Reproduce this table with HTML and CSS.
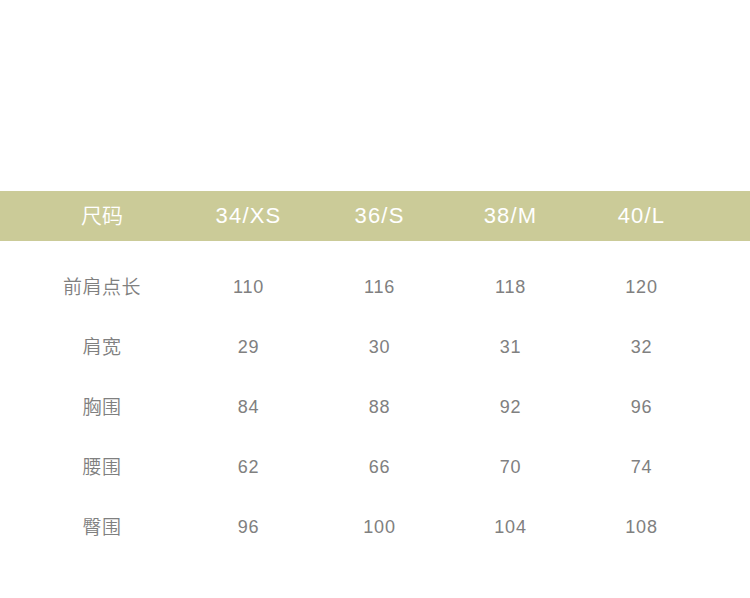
FILE: index.html
```html
<!DOCTYPE html>
<html lang="zh-CN">
<head>
<meta charset="utf-8">
<title>尺码表</title>
<link rel="stylesheet" href="styles.css">
</head>
<body>
<div class="page">
  <div class="size-table">
    <div class="row head">
      <div class="cell label">尺码</div>
      <div class="cell">34/XS</div>
      <div class="cell">36/S</div>
      <div class="cell">38/M</div>
      <div class="cell">40/L</div>
    </div>
    <div class="body">
      <div class="row">
        <div class="cell label">前肩点长</div>
        <div class="cell">110</div>
        <div class="cell">116</div>
        <div class="cell">118</div>
        <div class="cell">120</div>
      </div>
      <div class="row">
        <div class="cell label">肩宽</div>
        <div class="cell">29</div>
        <div class="cell">30</div>
        <div class="cell">31</div>
        <div class="cell">32</div>
      </div>
      <div class="row">
        <div class="cell label">胸围</div>
        <div class="cell">84</div>
        <div class="cell">88</div>
        <div class="cell">92</div>
        <div class="cell">96</div>
      </div>
      <div class="row">
        <div class="cell label">腰围</div>
        <div class="cell">62</div>
        <div class="cell">66</div>
        <div class="cell">70</div>
        <div class="cell">74</div>
      </div>
      <div class="row">
        <div class="cell label">臀围</div>
        <div class="cell">96</div>
        <div class="cell">100</div>
        <div class="cell">104</div>
        <div class="cell">108</div>
      </div>
    </div>
  </div>
</div>
</body>
</html>
```

FILE: styles.css
```css
html, body {
  margin: 0;
  padding: 0;
  background: #ffffff;
}

.page {
  width: 750px;
  height: 598px;
  padding-top: 191px;
  box-sizing: border-box;
  font-family: "Liberation Sans", "Noto Sans CJK SC", sans-serif;
}

.row {
  display: grid;
  grid-template-columns: 162px repeat(4, 131px);
  padding-left: 21px;
  align-items: center;
}

.cell {
  text-align: center;
  white-space: nowrap;
}

.label {
  font-family: "Noto Sans CJK SC", sans-serif;
  font-weight: 350;
}

.head {
  height: 50px;
  background: #cbcb98;
  color: #ffffff;
  font-size: 22px;
  letter-spacing: 1.2px;
}

.head .label {
  font-size: 21px;
  letter-spacing: 0;
  line-height: 1;
  padding-bottom: 3px;
}

.body {
  padding-top: 16px;
}

.body .row {
  height: 60px;
  color: #808080;
  font-size: 18px;
  letter-spacing: 0.8px;
}

.body .label {
  font-size: 19px;
  letter-spacing: 0.5px;
  line-height: 1;
  padding-bottom: 4px;
}
```
